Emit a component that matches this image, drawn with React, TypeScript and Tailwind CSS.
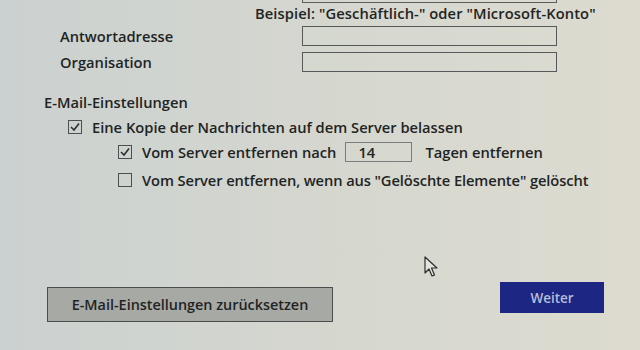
const font = { fontFamily: '"Open Sans", "Noto Sans", sans-serif' }

function Check({ checked }: { checked?: boolean }) {
  return (
    <div className="w-[14px] h-[14px] border border-[#4b4f4f] flex items-center justify-center shrink-0">
      {checked && (
        <svg width="12" height="12" viewBox="0 0 12 12">
          <polyline points="2,6 5,9 10,2.5" fill="none" stroke="#2c3132" strokeWidth="1.6" />
        </svg>
      )}
    </div>
  )
}

export default function App() {
  return (
    <div
      className="relative w-[640px] h-[350px] overflow-hidden bg-linear-to-r from-[#cbd1d0] via-[#d5d7cf] to-[#dddbd0] text-[#1f2424] text-[14.7px] font-semibold leading-[18px]"
      style={font}
    >
      <div className="flex flex-col">
        <div className="ml-[302px] -mt-[17px] w-[255px] h-[20px] border border-[#5a5d5c]" />
        <div className="mt-[1px] pl-[255px] whitespace-nowrap tracking-[0.1px]">
          Beispiel: "Geschäftlich-" oder "Microsoft-Konto"
        </div>

        <div className="mt-[4px] flex items-center h-[20px]">
          <span className="pl-[60px] w-[302px]">Antwortadresse</span>
          <div className="w-[255px] h-[20px] border border-[#55595a] bg-[#d9dad4]/20" />
        </div>
        <div className="mt-[6px] flex items-center h-[20px]">
          <span className="pl-[60px] w-[302px]">Organisation</span>
          <div className="w-[255px] h-[20px] border border-[#55595a] bg-[#d9dad4]/20" />
        </div>

        <div className="mt-[21px] pl-[44px]">E-Mail-Einstellungen</div>

        <div className="mt-[7px] pl-[68px] flex items-center gap-[10px] h-[18px]">
          <Check checked />
          <span className="whitespace-nowrap">Eine Kopie der Nachrichten auf dem Server belassen</span>
        </div>

        <div className="mt-[6px] pl-[118px] flex items-center h-[20px]">
          <Check checked />
          <span className="ml-[10px] whitespace-nowrap">Vom Server entfernen nach</span>
          <div className="ml-[9px] w-[67px] h-[20px] border border-[#7a7d7b] pl-[12px] flex items-center shrink-0">14</div>
          <span className="ml-[13px] whitespace-nowrap">Tagen entfernen</span>
        </div>

        <div className="mt-[9px] pl-[118px] flex items-center gap-[10px] h-[18px]">
          <Check />
          <span className="whitespace-nowrap tracking-[-0.1px]">Vom Server entfernen, wenn aus "Gelöschte Elemente" gelöscht</span>
        </div>

        <div className="mt-[93px] pl-[47px] flex items-start">
          <button className="mt-[5px] w-[286px] h-[35px] shrink-0 bg-[#a7a9a4] border border-[#4a4d4c] text-[#1f2424] font-semibold text-[14.4px] whitespace-nowrap">
            E-Mail-Einstellungen zurücksetzen
          </button>
          <button className="ml-[167px] w-[104px] h-[31px] shrink-0 bg-[#1d2682] text-[#b4bdd8] font-semibold text-[13.5px]">
            Weiter
          </button>
        </div>
      </div>

      <svg className="absolute left-[424px] top-[256px]" width="16" height="22" viewBox="0 0 16 22">
        <path d="M1 1 L1 17 L5 13 L8 20 L10.5 19 L7.5 12 L13 12 Z" fill="#e4e4de" stroke="#2a2e2f" strokeWidth="1.2" strokeLinejoin="round" />
      </svg>
    </div>
  )
}
